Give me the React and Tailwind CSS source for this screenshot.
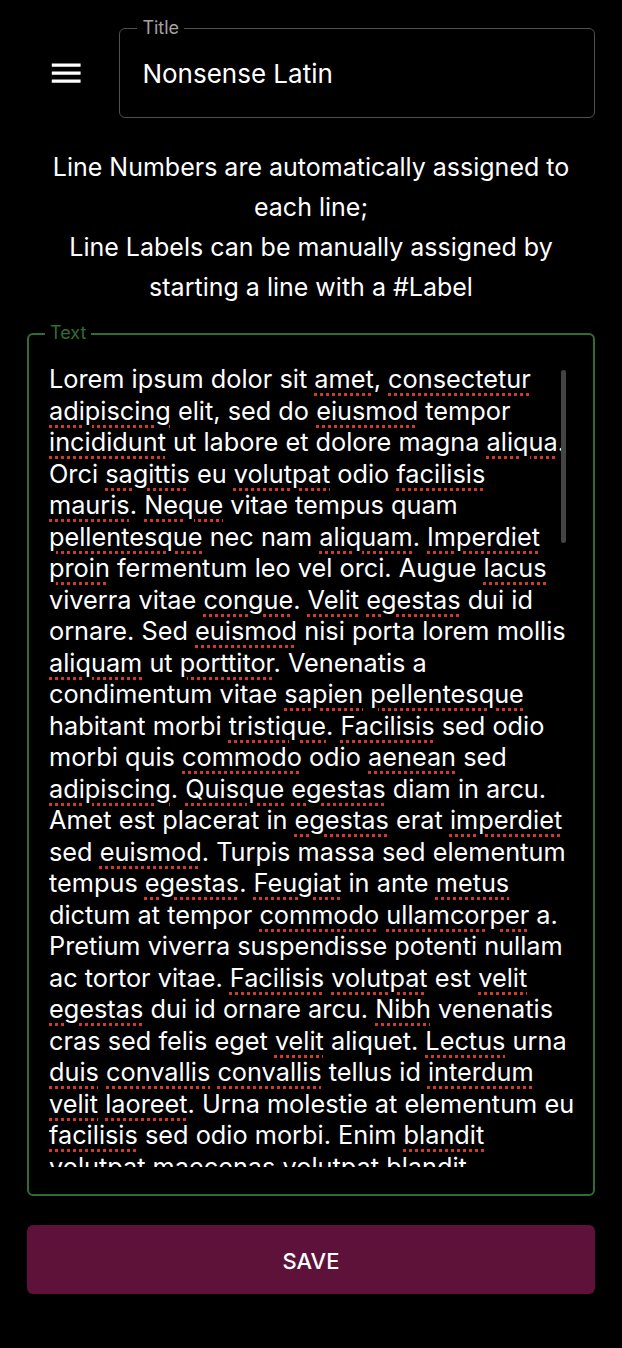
import React from 'react';

const LINES = [
  'Lorem ipsum dolor sit ~amet, ~consectetur',
  '~adipiscing elit, sed do ~eiusmod tempor',
  '~incididunt ut labore et dolore magna ~aliqua.',
  'Orci ~sagittis eu ~volutpat odio ~facilisis',
  '~mauris. ~Neque vitae tempus quam',
  '~pellentesque nec nam ~aliquam. ~Imperdiet',
  '~proin fermentum leo vel orci. Augue ~lacus',
  'viverra vitae ~congue. ~Velit ~egestas dui id',
  'ornare. Sed ~euismod nisi porta lorem mollis',
  '~aliquam ut ~porttitor. Venenatis a',
  'condimentum vitae ~sapien ~pellentesque',
  'habitant morbi ~tristique. ~Facilisis sed odio',
  'morbi quis ~commodo odio ~aenean sed',
  '~adipiscing. ~Quisque ~egestas diam in arcu.',
  'Amet est placerat in ~egestas erat ~imperdiet',
  'sed ~euismod. Turpis massa sed elementum',
  'tempus ~egestas. ~Feugiat in ante ~metus',
  'dictum at tempor ~commodo ~ullamcorper a.',
  'Pretium viverra suspendisse potenti nullam',
  'ac tortor vitae. ~Facilisis ~volutpat est ~velit',
  '~egestas dui id ornare arcu. ~Nibh venenatis',
  'cras sed felis eget ~velit aliquet. ~Lectus urna',
  '~duis ~convallis ~convallis tellus id ~interdum',
  '~velit ~laoreet. Urna molestie at elementum eu',
  '~facilisis sed odio morbi. Enim ~blandit',
  '~volutpat ~maecenas ~volutpat ~blandit',
];

// words starting with ~ get the spellcheck squiggle (trailing punctuation excluded)
const Line = ({ text }) => {
  const words = text.split(' ');
  return (
    <div className="whitespace-nowrap">
      {words.map((w, i) => {
        const sep = i < words.length - 1 ? ' ' : '';
        if (!w.startsWith('~')) return <React.Fragment key={i}>{w + sep}</React.Fragment>;
        const m = w.slice(1).match(/^([A-Za-z]+)(.*)$/);
        return (
          <React.Fragment key={i}>
            <span className="underline decoration-dotted decoration-[#d0392b] decoration-[length:3px] underline-offset-[5px]">{m[1]}</span>
            {m[2] + sep}
          </React.Fragment>
        );
      })}
    </div>
  );
};

const MenuIcon = () => (
  <svg viewBox="0 0 24 24" className="w-[38.4px] h-[38.4px] fill-white shrink-0">
    <path d="M3 18h18v-2H3v2zm0-5h18v-2H3v2zm0-7v2h18V6H3z" />
  </svg>
);

export default function App() {
  return (
    <div className="min-h-[1348px] w-full bg-black px-[27px] pt-[28px] text-white font-['Inter',sans-serif]">
      <div className="flex items-center">
        <div className="ml-[20px]">
          <MenuIcon />
        </div>
        <div className="relative ml-[34px] flex h-[90px] flex-1 items-center rounded-[6px] border border-[#4f4f4f] px-[22px] pt-[2px]">
          <span className="absolute left-[17px] top-[-13px] bg-black px-[5px] text-[18px] leading-[24px] text-[#a3a3a3]">Title</span>
          <span className="text-[26px] leading-[32px]">Nonsense Latin</span>
        </div>
      </div>

      <div className="mt-[29px] text-center text-[25px] leading-[40px]">
        <p>Line Numbers are automatically assigned to</p>
        <p>each line;</p>
        <p>Line Labels can be manually assigned by</p>
        <p>starting a line with a #Label</p>
      </div>

      <div className="relative mt-[26px] h-[863px] rounded-[6px] border-[2.5px] border-[#2f6d33] pl-[20px] pt-[28px] pb-[27px]">
        <span className="absolute left-[16px] top-[-14px] bg-black px-[5px] text-[18px] leading-[24px] text-[#2f6d33]">Text</span>
        <div className="h-full overflow-hidden text-[25.3px] leading-[31.5px]">
          {LINES.map((l, i) => (
            <Line key={i} text={l} />
          ))}
        </div>
        <div className="absolute left-[532px] top-[35px] h-[173px] w-[5px] rounded-full bg-[#444444]" />
      </div>

      <button className="mt-[29px] flex h-[69px] w-full items-center justify-center rounded-[6px] bg-[#5e1239] pt-[3px] text-[22px] font-medium uppercase text-white">
        Save
      </button>
    </div>
  );
}
